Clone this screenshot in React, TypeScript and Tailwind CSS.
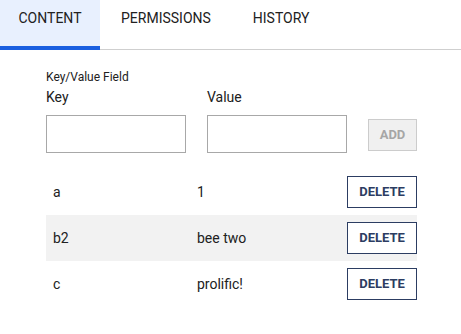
import React from "react";

const rows = [
  { k: "a", v: "1" },
  { k: "b2", v: "bee two" },
  { k: "c", v: "prolific!" },
];

export default function App() {
  return (
    <div className="w-[461px] h-[334px] bg-white text-[#212121]" style={{ fontFamily: "Roboto, 'Liberation Sans', sans-serif" }}>
      <div className="flex h-[50px] border-b border-[#cfcfcf]">
        <div className="h-[50px] w-[100px] bg-[#e8f0fe] border-b-4 border-[#1a5fe0] flex justify-center pt-[8px] text-[14px] leading-[20px] -mb-px">
          CONTENT
        </div>
        <div className="h-[50px] px-[21px] flex pt-[8px] text-[14px] leading-[20px]">PERMISSIONS</div>
        <div className="h-[50px] px-[21px] flex pt-[8px] text-[14px] leading-[20px]">HISTORY</div>
      </div>
      <div className="pl-[46px] pr-[44px] pt-[19px]">
        <div className="text-[12px] leading-[16px]">Key/Value Field</div>
        <div className="flex gap-[21px] items-center mt-[3px]">
          <div className="flex flex-col w-[140px]">
            <div className="text-[14px] leading-[18px]">Key</div>
            <input className="mt-[9px] h-[38px] w-[140px] border border-[#a8a8a8] outline-none" />
          </div>
          <div className="flex flex-col w-[140px]">
            <div className="text-[14px] leading-[18px]">Value</div>
            <input className="mt-[9px] h-[38px] w-[140px] border border-[#a8a8a8] outline-none" />
          </div>
          <button className="mt-[28px] h-[32px] w-[49px] border border-[#cccccc] bg-[#f0f0f0] text-[#a6a6a6] text-[13px] font-bold">
            ADD
          </button>
        </div>
        <div className="mt-[16px] flex flex-col">
          {rows.map((r, i) => (
            <div key={r.k} className={`h-[46px] flex items-center ${i === 1 ? "bg-[#f2f2f2]" : ""}`}>
              <div className="w-[151px] pl-[7px] text-[14px]">{r.k}</div>
              <div className="flex-1 text-[14px]">{r.v}</div>
              <button className="h-[32px] w-[70px] border border-[#2c3d62] text-[#2c3d62] text-[13px] font-bold bg-white">
                DELETE
              </button>
            </div>
          ))}
        </div>
      </div>
    </div>
  );
}
